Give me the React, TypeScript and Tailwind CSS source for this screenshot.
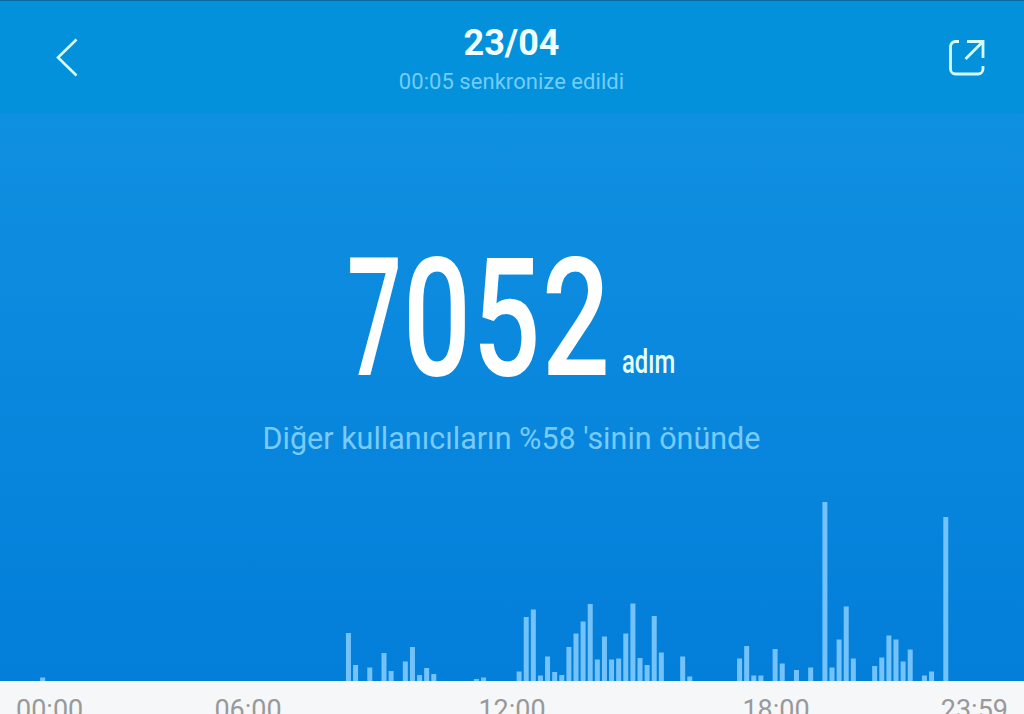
// App.tsx
const SLOT_COUNT = 144 // one slot is 10 minutes

// [slot, bar height in px]
const activity: [number, number][] = [
  [6, 3.5], [49, 48], [50, 16], [52, 13.5], [54, 28], [55, 10], [57, 19.5],
  [58, 34], [59, 6], [60, 13], [61, 7], [67, 2], [68, 3.5], [73, 9.5],
  [74, 64], [75, 71.5], [76, 5.5], [77, 24.5], [78, 9], [79, 6], [80, 34],
  [81, 47.5], [82, 59.5], [83, 77], [84, 21.5], [85, 44.5], [86, 21.5],
  [87, 22.5], [88, 47.5], [89, 77.5], [90, 23], [91, 16], [92, 65],
  [93, 28.5], [96, 24.5], [97, 4.5], [104, 22.5], [105, 35], [106, 5.5],
  [107, 5.5], [109, 32], [110, 17.5], [112, 11], [114, 13.5], [116, 179],
  [117, 13.5], [118, 41.5], [119, 74.5], [120, 22.5], [123, 15],
  [124, 23.5], [125, 45.5], [126, 41.5], [127, 19.5], [128, 31.5],
  [130, 5.5], [131, 9.5], [133, 164],
]

function Header() {
  return (
    <header className="flex h-[114px] shrink-0 items-start justify-between border-t border-[#08699f] bg-[#0391db] pr-[39px] pl-[38px]">
      <button aria-label="Geri" className="mt-[37px] flex w-[54px] justify-center pl-[4px]">
        <svg width="22" height="39" viewBox="0 0 22 39" fill="none" stroke="#d5fcff" strokeWidth="2.6">
          <path d="M20.5 1.5 2 19.5l18.5 18" />
        </svg>
      </button>
      <div className="flex flex-col items-center">
        <h1 className="mt-[22px] text-[36px] leading-[41px] font-bold text-[#f0ffff]">23/04</h1>
        <p className="mt-[4px] text-[22px] leading-[28px] tracking-[0.05px] text-[#72cdf8]">00:05 senkronize edildi</p>
      </div>
      <button aria-label="Paylaş" className="mt-[38px] flex w-[54px] justify-end">
        <svg width="37" height="37" viewBox="0 0 37 37" fill="none" stroke="#d5fcff" strokeWidth="2.8">
          <path d="M11 2.5H7.5a5 5 0 0 0-5 5V30a5 5 0 0 0 5 5H30a5 5 0 0 0 5-5v-3" />
          <path d="M19 2.5h16V19M34.5 3 17.5 20" />
        </svg>
      </button>
    </header>
  )
}

function StepCount() {
  return (
    <div className="ml-[347px] flex h-[288px] items-end leading-[166px] font-medium whitespace-nowrap text-white">
      {/* the 7 is set tighter than the other digits */}
      <div className="flex w-[275px] text-[165px]">
        <span className="w-[56px] origin-left scale-x-[0.585]">7</span>
        <span className="origin-left scale-x-[0.725] tracking-[2px]">052</span>
      </div>
      <span className="origin-left scale-x-[0.7] pb-[17px] text-[34px] leading-[48px] text-[#e6ffff]">
        adım
      </span>
    </div>
  )
}

function StepChart() {
  return (
    <svg className="block w-full" height="190" viewBox="0 0 1024 190" fill="#73c2fa">
      {activity.map(([slot, height]) => (
        <rect
          key={slot}
          x={(slot * 1024) / SLOT_COUNT - 2.5}
          y={190 - height}
          width="5"
          height={height}
        />
      ))}
    </svg>
  )
}

export default function App() {
  return (
    <div className="flex h-[714px] w-[1024px] flex-col overflow-hidden bg-[#f5f7f9] font-['Roboto',sans-serif]">
      <Header />
      <main className="flex h-[567px] shrink-0 flex-col bg-linear-to-b from-[#1090e1] to-[#037ed9]">
        <StepCount />
        <p className="mt-[17px] pr-[1px] text-center text-[30.5px] leading-[40px] text-[#78cbf8]">
          Diğer kullanıcıların %58 &apos;sinin önünde
        </p>
        <div className="mt-auto">
          <StepChart />
        </div>
      </main>
      <footer className="grid h-[33px] shrink-0 grid-cols-[116px_1fr_1fr_1fr_116px] pt-[13px] text-center text-[27px] leading-[32px] text-[#999]">
        <span className="pl-4 text-left">00:00</span>
        <span>06:00</span>
        <span>12:00</span>
        <span>18:00</span>
        <span className="pr-4 text-right">23:59</span>
      </footer>
    </div>
  )
}
